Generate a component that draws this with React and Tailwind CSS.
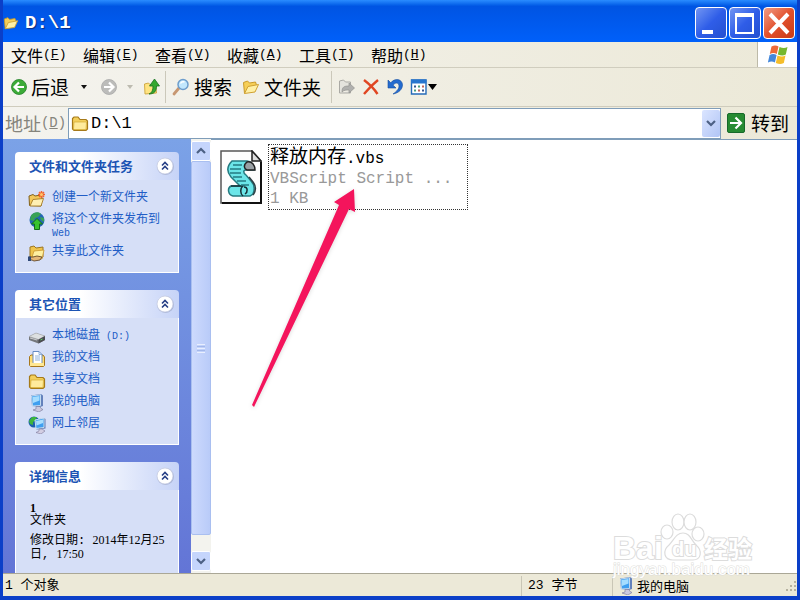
import React, { useState } from 'react';

const FolderIcon = ({ className }) => (
    <svg viewBox="0 0 18 18" className={className} aria-hidden="true">
        <path d="M1.5 15V4.500L3 3h4l2 2.500h6l1.500 1.500v8L15 16.500H3z" fill="#f3cf5b" stroke="#a67a1a" strokeWidth="1.200" />
        <path d="M2.500 15l.500-7h12.500l-.500 7.500H3z" fill="#ffeb9c" stroke="#d3a934" strokeWidth="0.7" />
    </svg>
);

const OpenFolderIcon = ({ className }) => (
    <svg viewBox="0 0 18 18" className={className} aria-hidden="true">
        <path d="M2.5 15.5L1.5 4.5l4-1.5 2 2 6-1 1 3" fill="#f6cf57" stroke="#c99a2a" strokeWidth="1" />
        <path d="M2.5 15.5L6 8.5l10.5-2L13 14z" fill="#fff0a5" stroke="#d0a132" strokeWidth="1" strokeLinejoin="round" />
    </svg>
);

const NewFolderIcon = ({ className }) => (
    <svg viewBox="0 0 18 18" className={className} aria-hidden="true">
        <path d="M1.5 15.5L1 6l4-1.5L7 6l6-1 1 3-1 8z" fill="#f3c85a" stroke="#80601c" strokeWidth="1" />
        <path d="M2 16l3-6.5 10.5-1L13 16z" fill="#fff0b4" stroke="#a57b25" strokeWidth="0.9" />
        <path d="M13.5 1v7M10 4.5h7M11 2l5 5M16 2l-5 5" stroke="#f2652c" strokeWidth="1.5" />
        <circle cx="13.5" cy="4.5" r="1.5" fill="#ffc66a" />
    </svg>
);

const PublishIcon = ({ className }) => (
    <svg viewBox="0 0 18 18" className={className} aria-hidden="true">
        <circle cx="9" cy="8" r="7.5" fill="#2467b4" />
        <path d="M3 3.5C6-.5 11-.5 13 2l-3 3-3 1-1 3-4-1zM12 5l4 1v4l-3-2z" fill="#38a256" />
        <path d="M9 6.5l5.5 5.5h-3v5.5h-5V12h-3z" fill="#37c42d" stroke="#126c1a" strokeWidth="1" />
    </svg>
);

const ShareIcon = ({ className }) => (
    <svg viewBox="0 0 18 18" className={className} aria-hidden="true">
        <path d="M2 14V3l4-1 2 2 7-1v10z" fill="#f0c54d" stroke="#9c7624" strokeWidth="1" />
        <path d="M4 13l2-6 10-1-2 9z" fill="#fff0a0" stroke="#c89631" strokeWidth="0.8" />
        <path d="M1 13h4l4-1 5 1-2 3-6 1-2-1H1z" fill="#e5b878" stroke="#553918" strokeWidth="0.8" />
        <path d="M0 12.5h3V17H0z" fill="#304a78" />
    </svg>
);

const DriveIcon = ({ className }) => (
    <svg viewBox="0 0 18 18" className={className} aria-hidden="true">
        <path d="M1 8.5L8 5l9 3v4l-6.5 3.5L1 12z" fill="#74777c" />
        <path d="M1 8.5L8 5l9 3-6.5 3.5z" fill="#dde0e1" stroke="#a7a9ad" strokeWidth="0.6" />
        <path d="M10.5 11.5L17 8v4l-6.5 3.5z" fill="#4b4c52" />
        <path d="M12.5 12l2-1" stroke="#66d367" strokeWidth="1" />
        <path d="M2 10l7 2" stroke="#f0f0f0" strokeWidth="0.7" />
    </svg>
);

const DocumentsIcon = ({ className }) => (
    <svg viewBox="0 0 18 18" className={className} aria-hidden="true">
        <path d="M1.5 15V6.5L3 5h12l1.5 2v8.5l-1 1h-13z" fill="#ffdc70" stroke="#a7771e" strokeWidth="1" />
        <path d="M5 13.5V1.5h6l3 3v9z" fill="#fff" stroke="#5880bb" strokeWidth="0.9" />
        <path d="M11 1.5v3h3M7 6h5M7 8h5M7 10h5" fill="none" stroke="#75a0d2" strokeWidth="0.8" />
        <path d="M2 16v-4l3 1h11v3z" fill="#ffe894" />
    </svg>
);

const ComputerIcon = ({ className }) => (
    <svg viewBox="0 0 18 18" className={className} aria-hidden="true">
        <path d="M3 1.500L13 0l2 1.500V12l-3 1-8-1z" fill="#6482bc" />
        <path d="M3.500 2L12.500.800V11.500L4.500 12z" fill="#3f9ff0" stroke="#c1d9ef" strokeWidth="1" />
        <path d="M4.500 3l7-1v4.500L5 9z" fill="#a5ddff" />
        <path d="M8 12.500h4l1 2 2 1-4 2.500-6-2 3-1z" fill="#cbc9de" stroke="#777698" strokeWidth="0.6" />
    </svg>
);

const NetworkIcon = ({ className }) => (
    <svg viewBox="0 0 18 18" className={className} aria-hidden="true">
        <circle cx="6" cy="6" r="5.5" fill="#1b5fae" />
        <path d="M1 5l3-4 5 0-2 4-2 1v3l-3-1z" fill="#3db53d" />
        <path d="M7 4l9-2 1.500 1v9.500l-9 1z" fill="#5e79b2" />
        <path d="M7 4l9-2v9.500l-8 1z" fill="#3f9ff0" stroke="#c9dff1" strokeWidth="1" />
        <path d="M8 5l7-1.500V7L8.500 9.500z" fill="#a8defd" />
        <path d="M11 13h3l3 2-4 3-5-1.500 3-1.500z" fill="#d3cee2" stroke="#7d789a" strokeWidth="0.6" />
    </svg>
);

const ScriptIcon = ({ className }) => (
    <svg viewBox="0 0 42 54" className={className} aria-hidden="true">
        <path d="M1 1h31l9 10v42H1z" fill="#fdfdfd" stroke="#555" strokeWidth="1.5" />
        <path d="M41 12v41H2" fill="none" stroke="#111" strokeWidth="2" />
        <path d="M32 1v10h9z" fill="#ddd" stroke="#222" strokeWidth="1.5" />
        <path d="M12 11h15c4 0 7 4 7 9h-8c-3 0-3 3 0 5l5 6c4 4 4 8 2 13l-3 2H13c-5-1-6-8-2-10h9l-9-9c-5-6-4-11 1-16z" fill="#6be5e8" stroke="#257a80" strokeWidth="1.5" />
        <path d="M27 12c-4 3-3 7 0 8h8c0-5-3-9-8-8z" fill="#9aa0a4" stroke="#222" strokeWidth="1.5" />
        <path d="M11 36h12c-3 2-3 8 0 10M24 37c4 0 4 5 1 7" fill="none" stroke="#152f36" strokeWidth="1.5" />
        <path d="M13 15h9M10 19h11M10 23h11M13 27h9M17 31h9M21 35h8" stroke="#247b82" strokeWidth="1.5" />
        <path d="M29 27l4 5c3 4 3 9 0 13" fill="none" stroke="#2d4045" strokeWidth="1.5" />
    </svg>
);

const WindowsFlag = ({ className }) => (
    <svg viewBox="0 0 20 20" className={className} aria-hidden="true">
        <path d="M3.500 1.500c3-1.500 5-1 7 0L8.800 9c-2-1-4-1.500-7 0z" fill="#ed6a38" />
        <path d="M11.500 2c3 1 5 1.500 8 0l-1.700 7.500c-3 1.500-5 1-8 0z" fill="#76b82f" />
        <path d="M1.600 10c3-1.500 5-1 7 0L6.900 17.500c-2-1-4-1.500-7 0z" fill="#4387db" />
        <path d="M9.500 10.500c3 1 5 1.500 8 0l-1.700 7.500c-3 1.500-5 1-8 0z" fill="#f5bd2a" />
    </svg>
);

const Chevron = ({ up, className }) => (
    <svg viewBox="0 0 10 8" className={className} aria-hidden="true">
        <path d={up ? 'M1 6l4-4 4 4' : 'M1 2l4 4 4-4'} fill="none" stroke="#4d6185" strokeWidth="2.2" />
    </svg>
);

const menus = [
    { label: '文件', accel: 'F' },
    { label: '编辑', accel: 'E' },
    { label: '查看', accel: 'V' },
    { label: '收藏', accel: 'A' },
    { label: '工具', accel: 'T' },
    { label: '帮助', accel: 'H' },
];

const tasks = [
    { label: '创建一个新文件夹', icon: NewFolderIcon },
    { label: '将这个文件夹发布到', latin: 'Web', icon: PublishIcon },
    { label: '共享此文件夹', icon: ShareIcon },
];

const places = [
    { label: '本地磁盘', latin: ' (D:)', icon: DriveIcon },
    { label: '我的文档', icon: DocumentsIcon },
    { label: '共享文档', icon: FolderIcon },
    { label: '我的电脑', icon: ComputerIcon },
    { label: '网上邻居', icon: NetworkIcon },
];

// Han text is set in the CJK face, Latin text in the monospaced one
const han = "font-['Noto_Sans_CJK_SC',sans-serif]";
const latinMono = "font-['Liberation_Mono',monospace]";
const digits = "font-['Liberation_Serif',serif]";

const Panel = ({ title, children }) => {
    const [open, setOpen] = useState(true);

    return (
        <section className="shrink-0">
            <button
                onClick={() => setOpen(!open)}
                aria-expanded={open}
                className={`flex h-7 w-full items-center justify-between rounded-t bg-linear-to-r from-white from-40% to-[#c6d3f7] pl-3.5 pr-1 text-[13px] font-bold text-[#1c54b4] ${han}`}
            >
                {title}
                <svg viewBox="0 0 20 20" className="size-5" aria-hidden="true">
                    <circle cx="10.500" cy="10.500" r="8.500" fill="#a9b5d6" />
                    <circle cx="10" cy="10" r="8" fill="#fff" stroke="#c5cce2" strokeWidth="0.8" />
                    <path d="M7 9.500l3-3 3 3M7 13.500l3-3 3 3" fill="none" stroke="#263f86" strokeWidth="1.600" />
                </svg>
            </button>
            {open && <div className="border border-t-0 border-white bg-[#d6dff7]">{children}</div>}
        </section>
    );
};

const LinkList = ({ items }) => (
    <ul className="flex flex-col gap-1 py-2.5 pl-3 pr-2">
        {items.map(({ label, latin, icon: Icon }) => (
            <li key={label}>
                <a href="#" className="flex items-start gap-1.5 text-xs leading-[13px] text-[#215dc6] hover:underline">
                    <Icon className="size-[18px] shrink-0" />
                    <span className="pt-0.5 whitespace-pre-wrap">
                        {label}
                        {latin && <span className="text-[10px]">{latin}</span>}
                    </span>
                </a>
            </li>
        ))}
    </ul>
);

const App = () => {
    const [address, setAddress] = useState('D:\\1');

    return (
        <div className="flex h-screen flex-col overflow-hidden border-x-3 border-b-4 border-[#0b3fc8] bg-[#ece9d8] font-['Liberation_Mono','Noto_Sans_CJK_SC',monospace] text-black">
            {/* Title bar */}
            <header className="flex h-[42px] shrink-0 items-center justify-between bg-linear-to-b from-[#2a8cff] from-0% via-[#0054e3] via-15% to-[#0060fa]">
                <div className="flex items-center gap-1.5 pt-1">
                    <OpenFolderIcon className="size-4" />
                    <h1 className="text-[19px] font-bold text-white [text-shadow:1px_1px_1px_#0a2d80]">D:\1</h1>
                </div>
                <div className="flex gap-0.5 pr-0.5 pt-1">
                    <button aria-label="最小化" className="size-8 rounded border border-white bg-linear-to-br from-[#7294f2] via-[#2f5de8] to-[#2450d0]">
                        <svg viewBox="0 0 30 30" className="size-full"><path d="M6 22h11v4H6z" fill="#fff" /></svg>
                    </button>
                    <button aria-label="最大化" className="size-8 rounded border border-white bg-linear-to-br from-[#7294f2] via-[#2f5de8] to-[#2450d0]">
                        <svg viewBox="0 0 30 30" className="size-full">
                            <path d="M6 7h17v18H6z" fill="none" stroke="#fff" strokeWidth="2" />
                            <path d="M5 5h19v4H5z" fill="#fff" />
                        </svg>
                    </button>
                    <button aria-label="关闭" className="size-8 rounded border border-white bg-linear-to-br from-[#ef9a83] via-[#e2512c] to-[#c83a14]">
                        <svg viewBox="0 0 30 30" className="size-full"><path d="M6 6l18 19M24 6L6 25" stroke="#fff" strokeWidth="4" /></svg>
                    </button>
                </div>
            </header>

            {/* Menu bar */}
            <nav className="flex h-[26px] shrink-0 items-stretch justify-between border-b border-[#d0cdbe] bg-linear-to-r from-[#f4f3ee] to-[#ece9d8]">
                <div className="flex pl-2">
                    {menus.map((menu) => (
                        <button key={menu.accel} className={`flex w-18 items-center text-base ${han}`}>
                            {menu.label}
                            <span className={`text-[13px] ${latinMono}`}>(<u>{menu.accel}</u>)</span>
                        </button>
                    ))}
                </div>
                <div className="flex w-10 items-center justify-center border-l border-[#bdbaa8] bg-white">
                    <WindowsFlag className="size-5" />
                </div>
            </nav>

            {/* Toolbar */}
            <div className={`flex h-[39px] shrink-0 items-center border-b border-[#cfccbd] bg-linear-to-r from-[#f4f3ee] to-[#ece9d8] pl-2 text-[19px] ${han}`}>
                <button className="flex items-center gap-1">
                    <svg viewBox="0 0 16 16" className="size-4" aria-hidden="true">
                        <circle cx="8" cy="8" r="7.500" fill="#3cab38" stroke="#24812a" strokeWidth="0.8" />
                        <path d="M13 8H4M8 3.500L3.500 8 8 12.500" fill="none" stroke="#fff" strokeWidth="2.200" />
                    </svg>
                    后退
                </button>
                <button aria-label="后退历史" className="ml-3 flex">
                    <svg viewBox="0 0 6 4" className="h-1 w-1.5"><path d="M0 0h6L3 4z" fill="#111" /></svg>
                </button>
                <button aria-label="前进" className="ml-3.5 flex" disabled>
                    <svg viewBox="0 0 16 16" className="size-4">
                        <circle cx="8" cy="8" r="7.500" fill="#bcbcba" stroke="#aaa" strokeWidth="0.8" />
                        <path d="M3 8h9M8 3.500l4.500 4.500L8 12.500" fill="none" stroke="#fff" strokeWidth="2.200" />
                    </svg>
                </button>
                <button aria-label="前进历史" className="ml-2.5 flex" disabled>
                    <svg viewBox="0 0 6 4" className="h-1 w-1.5"><path d="M0 0h6L3 4z" fill="#bdbbb0" /></svg>
                </button>
                <button aria-label="向上" className="ml-2.5 flex">
                    <svg viewBox="0 0 18 18" className="size-[18px]">
                        <path d="M2 16L1.500 6l4-1 2 2 5-1 1 9z" fill="#ffe481" stroke="#cda43c" strokeWidth="0.9" />
                        <path d="M6 16c3-1 4-4 4-8H6.500L11.500 1l5 7h-3c0 5-2 8-7.500 8z" fill="#35a830" stroke="#157120" strokeWidth="0.8" />
                    </svg>
                </button>
                <span className="ml-1 h-8 w-px bg-[#cbc8ba]" />
                <button className="ml-1.5 flex items-center gap-1">
                    <svg viewBox="0 0 18 18" className="size-[18px]" aria-hidden="true">
                        <path d="M7 10l-5 6" stroke="#c79772" strokeWidth="2.800" strokeLinecap="round" />
                        <circle cx="11" cy="6.500" r="5" fill="#c2e7fd" stroke="#6d9dcc" strokeWidth="1.500" />
                        <path d="M8.500 5.500c1-2 2.500-2 4-1.500" fill="none" stroke="#fff" strokeWidth="1.500" />
                    </svg>
                    搜索
                </button>
                <button className="ml-2.5 flex items-center gap-1">
                    <OpenFolderIcon className="size-[18px]" />
                    文件夹
                </button>
                <span className="ml-2.5 h-8 w-px bg-[#cbc8ba]" />
                <button aria-label="移至" className="ml-1.5 flex" disabled>
                    <svg viewBox="0 0 18 18" className="size-[18px]">
                        <path d="M1.500 15V3l4-1 2 2h5v3M1.500 15h11v-2" fill="#e4e3dd" stroke="#aaa9a4" />
                        <path d="M4 14c0-5 2-6 7-6V5l5.500 5-5.500 5v-3c-3 0-5 0-7 2z" fill="#b0b0ae" stroke="#92928f" strokeWidth="0.7" />
                    </svg>
                </button>
                <button aria-label="删除" className="ml-1.5 flex">
                    <svg viewBox="0 0 18 18" className="size-[18px]">
                        <path d="M2 2c4 3 9 7 13.500 14M16 2C11 6 7 10 2 16" fill="none" stroke="#e04622" strokeWidth="2.400" />
                    </svg>
                </button>
                <button aria-label="撤消" className="ml-1.5 flex">
                    <svg viewBox="0 0 18 18" className="size-[18px]">
                        <path d="M2 2v8h8L7.200 7.200C9 4 13 4.500 13 8c0 3-2 5-6 8 6-1 9.500-5 9.500-9C16.500 1 8.500-.5 4.800 4.800z" fill="#246bcf" stroke="#164f9f" strokeWidth="0.6" />
                    </svg>
                </button>
                <button aria-label="查看方式" className="ml-1.5 flex items-center">
                    <svg viewBox="0 0 18 18" className="size-[18px]">
                        <path d="M1.500 2h14.500v14H1.500z" fill="#fff" stroke="#246bb9" strokeWidth="1.400" />
                        <path d="M1 1.500h15.500v4H1z" fill="#2775ce" />
                        <path d="M4 7.500h2v2H4zM12 11.500h2v2h-2z" fill="#34548f" />
                        <path d="M8 7.500h2v2H8zM4 11.500h2v2H4z" fill="#46a07c" />
                        <path d="M12 7.500h2v2h-2zM8 11.500h2v2H8z" fill="#bf6259" />
                    </svg>
                    <svg viewBox="0 0 9 6" className="h-1.5 w-[9px]"><path d="M0 0h9L4.500 6z" fill="#000" /></svg>
                </button>
            </div>

            {/* Address bar */}
            <div className={`flex h-8 shrink-0 items-center bg-linear-to-r from-[#f4f3ee] to-[#ece9d8] ${han}`}>
                <label htmlFor="address" className="flex w-[65px] shrink-0 items-center justify-center text-lg text-[#85847c]">
                    地址<span className={`text-sm ${latinMono}`}>(<u>D</u>)</span>
                </label>
                <div className="flex h-[31px] min-w-0 flex-1 items-center border border-[#7f9db9] bg-white pl-0.5">
                    <FolderIcon className="size-[18px] shrink-0" />
                    <input
                        id="address"
                        value={address}
                        onChange={(e) => setAddress(e.target.value)}
                        className={`min-w-0 flex-1 px-0.5 pt-0.5 text-[17px] outline-none ${latinMono}`}
                    />
                    <button aria-label="展开地址列表" className="flex h-[27px] w-[18px] shrink-0 items-center justify-center rounded-xs bg-linear-to-br from-[#dbe5ff] to-[#b1c5f5]">
                        <Chevron className="h-2 w-2.5" />
                    </button>
                </div>
                <button className="flex w-[76px] shrink-0 items-center gap-1.5 pl-1.5 text-[19px]">
                    <svg viewBox="0 0 18 20" className="h-5 w-[18px]" aria-hidden="true">
                        <rect x="0.500" y="0.500" width="17" height="19" rx="1.500" fill="#278b32" stroke="#17692a" />
                        <path d="M3 10h11M8.500 4.500L14 10l-5.500 5.500" fill="none" stroke="#fff" strokeWidth="2.200" />
                    </svg>
                    转到
                </button>
            </div>

            {/* Body */}
            <div className="flex min-h-0 flex-1">
                <aside className="flex w-[188px] shrink-0 flex-col gap-[17px] overflow-hidden bg-linear-to-b from-[#7ba2e7] to-[#6375d6] px-3 pt-[13px]">
                    <Panel title="文件和文件夹任务">
                        <LinkList items={tasks} />
                    </Panel>
                    <Panel title="其它位置">
                        <LinkList items={places} />
                    </Panel>
                    <Panel title="详细信息">
                        <div className="pt-3 pb-6 pl-3.5 pr-1 text-xs leading-[13px]">
                            <p className={`font-bold ${digits}`}>1</p>
                            <p>文件夹</p>
                            <p className="mt-1.5">
                                修改日期: <span className={digits}>2014</span>年<span className={digits}>12</span>月<span className={digits}>25</span>
                                <br />
                                日, <span className={digits}>17:50</span>
                            </p>
                        </div>
                    </Panel>
                </aside>

                {/* Scroll bar */}
                <div className="flex w-5 shrink-0 flex-col bg-[#f3f3ee] py-0.5">
                    <button aria-label="向上滚动" className="flex h-5 shrink-0 items-center justify-center rounded-xs border border-white bg-[#c5d5fc]">
                        <Chevron up className="h-2 w-2.5" />
                    </button>
                    <div className="mb-4 flex flex-1 flex-col items-center justify-center gap-px rounded-xs border border-[#a9bff0] bg-linear-to-r from-[#cddafd] to-[#b9cbf8]">
                        <span className="h-px w-2 bg-[#e9effe]" />
                        <span className="h-px w-2 bg-[#a3b8ea]" />
                        <span className="h-px w-2 bg-[#e9effe]" />
                        <span className="h-px w-2 bg-[#a3b8ea]" />
                        <span className="h-px w-2 bg-[#e9effe]" />
                    </div>
                    <button aria-label="向下滚动" className="flex h-5 shrink-0 items-center justify-center rounded-xs border border-white bg-[#c5d5fc]">
                        <Chevron className="h-2 w-2.5" />
                    </button>
                </div>

                <main className="relative min-w-0 flex-1 border-t border-[#7f9db9] bg-white pl-[9px] pt-1">
                    <button className="flex items-center gap-1.5 text-left">
                        <ScriptIcon className="h-[54px] w-[42px]" />
                        <span className="flex h-[66px] w-[200px] flex-col justify-center border border-dotted border-[#333] pl-px text-base leading-5">
                            <span className={`text-[19px] leading-5 ${han}`}>释放内存<span className={`text-base leading-5 ${latinMono}`}>.vbs</span></span>
                            <span className="truncate text-[#999]">VBScript Script ...</span>
                            <span className="text-[#999]">1 KB</span>
                        </span>
                    </button>
                    <svg viewBox="0 0 110 222" className="absolute left-10 top-12 h-[222px] w-[110px] drop-shadow-sm" aria-hidden="true">
                        <path d="M103 1L83 14l5 3L1 217l2 2L98 21l6 3z" fill="#f4145c" />
                    </svg>
                    <svg viewBox="0 0 170 72" className="absolute -bottom-2 right-4 h-[72px] w-[170px] overflow-visible" aria-hidden="true">
                        <g fill="#fff" stroke="#dcdcdc" strokeWidth="1.200" fontFamily="Liberation Sans, Noto Sans CJK SC, sans-serif" fontWeight="700">
                            <text x="2" y="50" fontSize="32" strokeWidth="2" paintOrder="stroke">Bai</text>
                            <ellipse cx="56" cy="23" rx="6" ry="7" />
                            <ellipse cx="67" cy="13" rx="6" ry="8" />
                            <ellipse cx="79" cy="13" rx="6" ry="8" />
                            <ellipse cx="87" cy="25" rx="6" ry="7" />
                            <path d="M72 24c7 0 8 7 13 12 7 6 5 15-3 15H62c-9 0-11-9-4-15 5-5 7-12 14-12z" />
                            <text x="61" y="47" fontSize="20" strokeWidth="2" paintOrder="stroke">du</text>
                            <text x="93" y="49" fontSize="24" strokeWidth="2" paintOrder="stroke">经验</text>
                        </g>
                        <text x="2" y="66" fontSize="17" fill="#fff" stroke="#dededa" strokeWidth="1" paintOrder="stroke" fontFamily="Liberation Sans, sans-serif">jingyan.baidu.com</text>
                    </svg>
                </main>
            </div>

            {/* Status bar */}
            <footer className="flex h-[23px] shrink-0 items-center border-t border-[#aaa796] pt-0.5 text-[13px] leading-5">
                <span className="flex-1 pl-0.5">1 个对象</span>
                <span className="w-[91px] border-l border-[#c9c6b6] pl-1.5">23 字节</span>
                <span className={`flex w-[185px] items-center gap-0.5 border-l border-[#c9c6b6] pl-1 ${han}`}>
                    <ComputerIcon className="size-[18px]" />
                    我的电脑
                    <svg viewBox="0 0 12 12" className="ml-auto size-3" aria-hidden="true">
                        <path d="M9 1h2v2H9zM5 5h2v2H5zM9 5h2v2H9zM1 9h2v2H1zM5 9h2v2H5zM9 9h2v2H9z" fill="#b5b19e" />
                    </svg>
                </span>
            </footer>
        </div>
    );
};

export default App;
